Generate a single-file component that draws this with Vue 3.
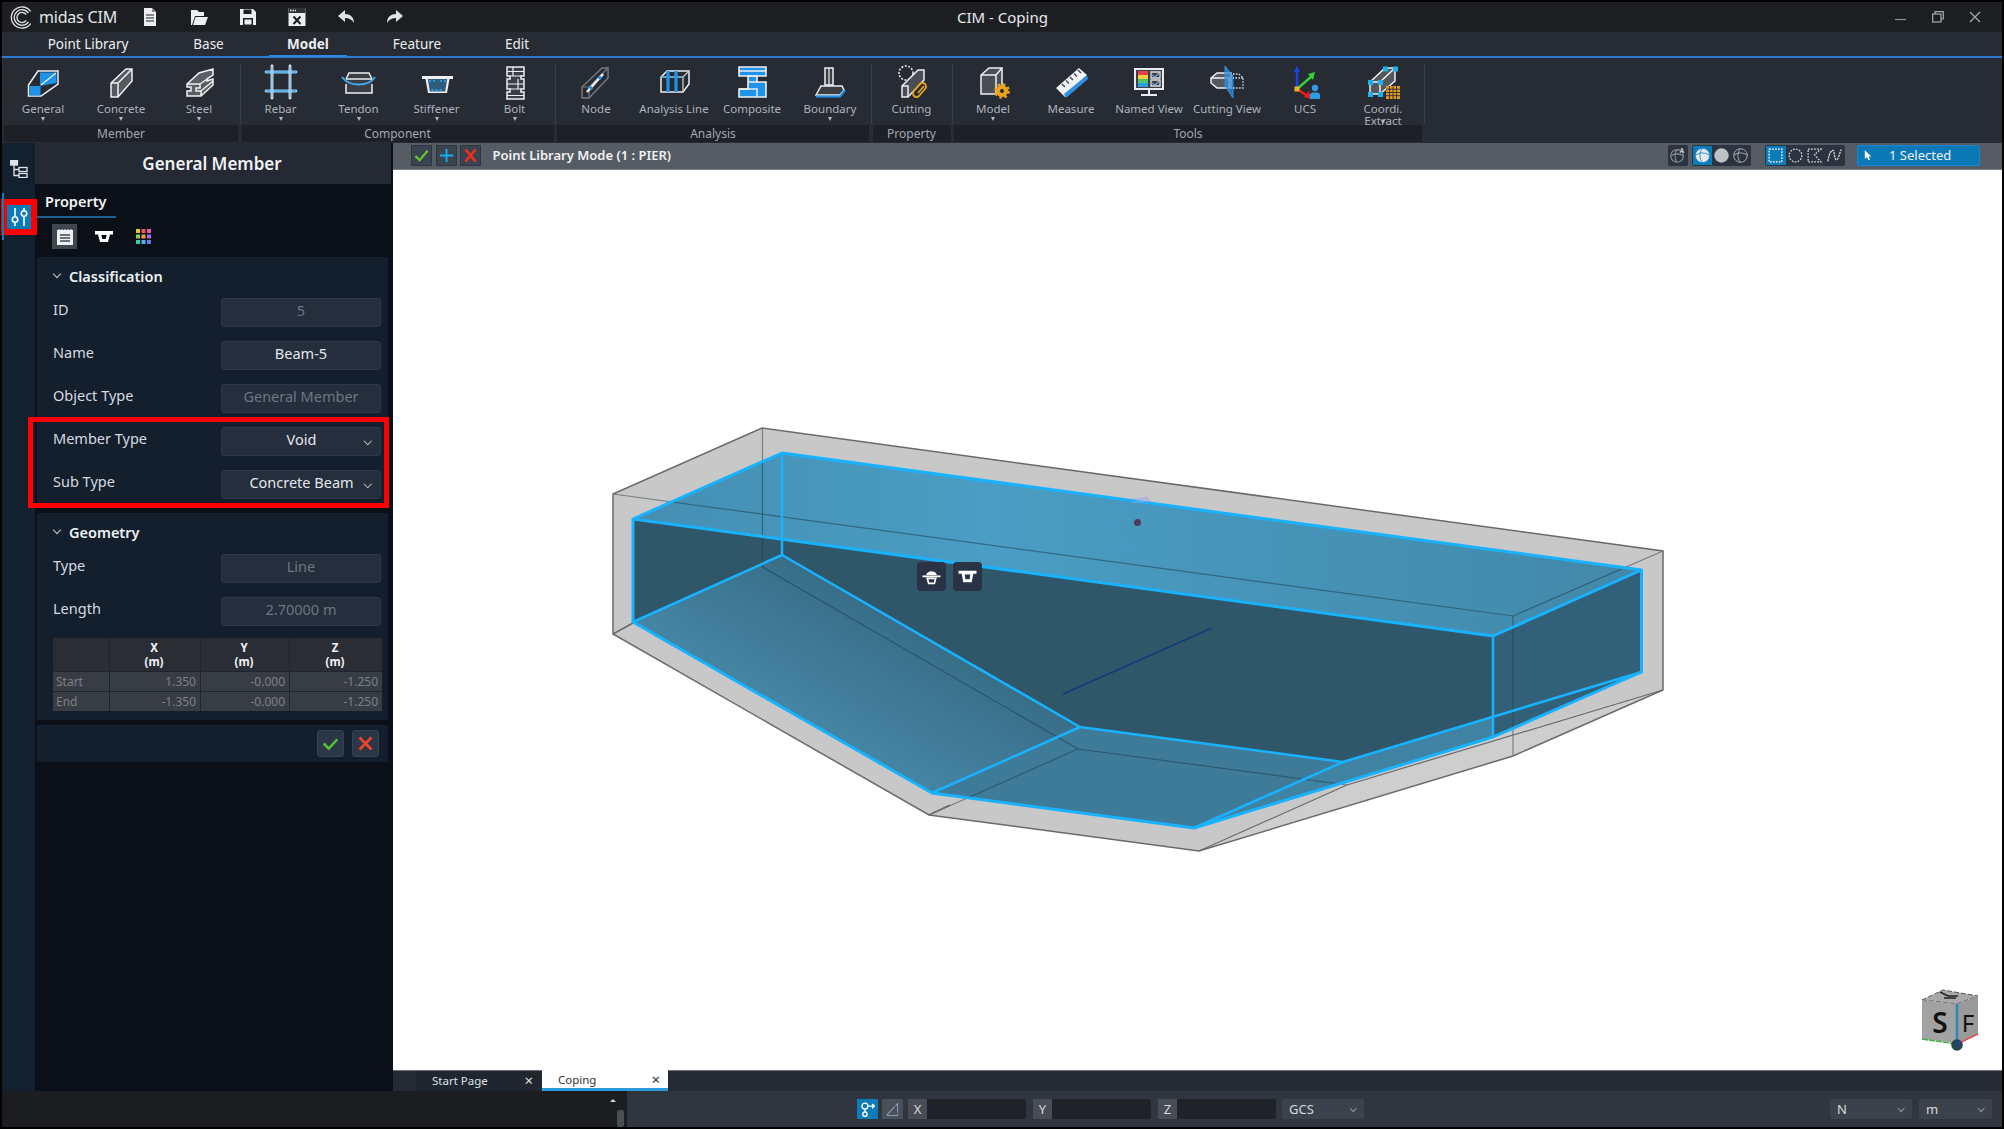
<template>
  <div class="app">
    <header class="titlebar">
      <svg class="logo" viewBox="0 0 26 26">
        <g fill="none" stroke="#dcdee2" stroke-width="1.500">
          <path d="M22.400 6.400A11.500 11.500 0 1 0 22.400 19.600" />
          <path d="M20 8.100A8.500 8.500 0 1 0 20 17.900" />
          <path d="M17.500 9.800A5.500 5.500 0 1 0 17.500 16.200" />
        </g>
      </svg>
      <span class="brand">midas CIM</span>
      <div class="quick">
        <svg v-for="q in quickIcons" :key="q.name" viewBox="0 0 20 20" v-html="q.svg"></svg>
      </div>
      <span class="doc-title">CIM - Coping</span>
      <div class="win-btns">
        <svg viewBox="0 0 12 12"><path d="M0 8.500H11" stroke="#8d9095" stroke-width="1.200" /></svg>
        <svg viewBox="0 0 12 12" fill="none" stroke="#a8abaf" stroke-width="1.200"><path d="M3 3V.7H11.300V8H9" /><rect x=".7" y="3" width="8.300" height="8" /></svg>
        <svg viewBox="0 0 12 12"><path d="M1 1L11 11M11 1L1 11" stroke="#a8abaf" stroke-width="1.200" /></svg>
      </div>
    </header>

    <nav class="menu">
      <a v-for="m in menus" :key="m.name" :class="{ on: m.name === 'Model' }" :style="{ width: m.w + 'px' }">{{ m.name }}</a>
    </nav>

    <section class="ribbon">
      <div v-for="g in groups" :key="g.name" class="group">
        <div class="tools">
          <div v-for="t in g.items" :key="t.name" class="tool">
            <svg viewBox="0 0 36 36" v-html="t.svg"></svg>
            <span class="tool-name" :class="{ two: t.two }">{{ t.name }}</span>
            <i v-if="t.drop" class="drop" :class="{ over: t.two }"></i>
          </div>
        </div>
        <div class="group-name">{{ g.name }}</div>
      </div>
    </section>

    <div class="main">
      <aside class="rail">
        <svg class="tree" viewBox="0 0 18 18" fill="none" stroke="#dfe3e8" stroke-width="1.300">
          <rect x=".5" y=".5" width="7" height="4.500" fill="#dfe3e8" />
          <path d="M4 5V15.500H9M4 9.500H9" />
          <rect x="9" y="7.500" width="8" height="4" />
          <rect x="9" y="13.500" width="8" height="4" />
        </svg>
        <div class="rail-active">
          <svg viewBox="0 0 24 24" fill="none" stroke="#fff" stroke-width="1.600">
            <path d="M8 3V11M8 18V21M17 3V5M17 12V21" />
            <circle cx="8" cy="14.500" r="2.700" />
            <circle cx="17" cy="8.500" r="2.700" />
          </svg>
        </div>
      </aside>

      <aside class="panel">
        <h2 class="panel-title">General Member</h2>
        <div class="prop-tab"><span>Property</span></div>
        <div class="prop-icons">
          <span class="prop-icon on">
            <svg viewBox="0 0 18 18"><path d="M1 2H17V17H1Z" fill="#eef0f2" /><path d="M3 1V3M6 1V3M9 1V3M12 1V3M15 1V3" stroke="#eef0f2" stroke-width="1" /><path d="M4 7H14M4 10H14M4 13H14" stroke="#3e4650" stroke-width="1.300" /></svg>
          </span>
          <span class="prop-icon">
            <svg viewBox="0 0 18 12" class="w18"><path d="M0 0H18V3.500H15L13 11H5L3 3.500H0Z" fill="#fff" /><path d="M6.300 4H11.700L10.800 8H7.200Z" fill="#0a0f18" /></svg>
          </span>
          <span class="prop-icon">
            <svg viewBox="0 0 15 15" class="w15">
              <rect v-for="c in swatches" :key="c.k" :x="c.x" :y="c.y" width="4" height="4" :fill="c.f" />
            </svg>
          </span>
        </div>

        <div class="sect">
          <div class="sect-title"><i class="chev"></i>Classification</div>
          <div class="row"><label>ID</label><div class="field off">5</div></div>
          <div class="row"><label>Name</label><div class="field">Beam-5</div></div>
          <div class="row"><label>Object Type</label><div class="field off">General Member</div></div>
          <div class="hl">
            <div class="row"><label>Member Type</label><div class="field sel">Void<i class="chev small"></i></div></div>
            <div class="row"><label>Sub Type</label><div class="field sel">Concrete Beam<i class="chev small"></i></div></div>
          </div>
        </div>

        <div class="sect second">
          <div class="sect-title"><i class="chev"></i>Geometry</div>
          <div class="row"><label>Type</label><div class="field off">Line</div></div>
          <div class="row"><label>Length</label><div class="field off">2.70000 m</div></div>
          <div class="coords">
            <div class="th"></div>
            <div class="th">X<br />(m)</div>
            <div class="th">Y<br />(m)</div>
            <div class="th">Z<br />(m)</div>
            <template v-for="r in coordRows" :key="r.name">
              <div class="td name">{{ r.name }}</div>
              <div v-for="(v, i) in r.vals" :key="i" class="td">{{ v }}</div>
            </template>
          </div>
        </div>

        <div class="sect foot">
          <button class="foot-btn"><svg viewBox="0 0 20 20"><path d="M2 10L8 16L18 5" fill="none" stroke="#52c234" stroke-width="3" /></svg></button>
          <button class="foot-btn"><svg viewBox="0 0 20 20"><path d="M3 3L17 17M17 3L3 17" fill="none" stroke="#f0442a" stroke-width="3.200" /></svg></button>
        </div>
      </aside>

      <main class="view">
        <div class="view-head">
          <button class="hbtn"><svg viewBox="0 0 16 16"><path d="M1.500 8.500L6 13L14.500 3" fill="none" stroke="#6cc52f" stroke-width="2.400" /></svg></button>
          <button class="hbtn"><svg viewBox="0 0 16 16"><path d="M8 1V15M1 8H15" stroke="#17aef0" stroke-width="2" /></svg></button>
          <button class="hbtn"><svg viewBox="0 0 16 16"><path d="M2.500 1.500L13.500 14.500M13.500 1.500L2.500 14.500" stroke="#ee2f1f" stroke-width="2.600" /></svg></button>
          <span class="mode">Point Library Mode (1 : PIER)</span>

          <div class="hgroup single">
            <svg viewBox="0 0 20 20" fill="none" stroke="#8b9096" stroke-width="1.200"><circle cx="9" cy="11" r="7" /><path d="M2 11C6 8 12 8 16 11M9 4C6 8 6 14 9 18" /><text x="12" y="7.500" font-size="7" fill="#c6c9cc" stroke="none" font-family="Noto Sans" font-weight="700">A</text></svg>
          </div>
          <div class="hgroup spheres">
            <span class="cell on"><svg viewBox="0 0 20 20" fill="#e8eaec" stroke="#1082c4" stroke-width="1"><circle cx="10" cy="10" r="8.500" /><path d="M1.500 10C6 6 14 6 18.500 10M10 1.500C6 6 6 14 10 18.500" fill="none" /></svg></span>
            <span class="cell"><svg viewBox="0 0 20 20"><circle cx="10" cy="10" r="8.500" fill="#bfc1c4" /></svg></span>
            <span class="cell"><svg viewBox="0 0 20 20" fill="none" stroke="#aeb1b5" stroke-width="1.100"><circle cx="10" cy="10" r="8" /><path d="M2 10C6 6 14 6 18 10M10 2C6 6 6 14 10 18" /></svg></span>
          </div>
          <div class="hgroup picks">
            <span class="cell on"><svg viewBox="0 0 20 20" fill="none" stroke="#fff" stroke-width="1.500" stroke-dasharray="2 1.500"><rect x="2.500" y="2.500" width="15" height="15" /></svg></span>
            <span class="cell"><svg viewBox="0 0 20 20" fill="none" stroke="#dfe1e3" stroke-width="1.500" stroke-dasharray="2 1.500"><circle cx="10" cy="10" r="7.500" /></svg></span>
            <span class="cell"><svg viewBox="0 0 20 20" fill="none" stroke="#dfe1e3" stroke-width="1.500" stroke-dasharray="2 1.500"><path d="M2.500 2.500H17.500L10 9L17.500 17.500H2.500Z" /></svg></span>
            <span class="cell"><svg viewBox="0 0 20 20" fill="none" stroke="#dfe1e3" stroke-width="1.500" stroke-dasharray="2.500 1"><path d="M2 17C4 7 6 4 8 4C10 4 10 15 12 15C15 15 16 6 18 3" /></svg></span>
          </div>
          <div class="selected">
            <svg viewBox="0 0 10 14"><path d="M1 1V12L3.800 9.500L5.500 13.500L7.500 12.500L5.800 8.800H9.200Z" fill="#fff" /></svg>
            <span>1 Selected</span>
          </div>
        </div>

        <div class="canvas">
          <svg class="scene" viewBox="393 170 1609 900">
            <defs>
              <linearGradient id="topFace" x1="0" y1="0" x2="1" y2="0">
                <stop offset="0" stop-color="#458fb3" />
                <stop offset=".35" stop-color="#4a9dc3" />
                <stop offset="1" stop-color="#4288a9" />
              </linearGradient>
              <linearGradient id="slope" gradientUnits="userSpaceOnUse" x1="860" y1="590" x2="780" y2="730">
                <stop offset="0" stop-color="#376c85" />
                <stop offset="1" stop-color="#4789a9" />
              </linearGradient>
            </defs>

            <!-- grey outer solid -->
            <polygon points="613,494 762,428 1663,551 1663,690 1513,756 1199,851 929,815 613,634" fill="#c8c8c8" />
            <polygon points="1513,732 1663,690 1513,756 1199,851 1347,785" fill="#cecece" />

            <!-- blue void -->
            <polygon points="633,519 782,453 1641.500,570 1641.500,672 1493,737 1194,828 932,793 633,622" fill="#2f5769" />
            <polygon points="633,622 782,555 1080,727 932,793" fill="url(#slope)" />
            <polygon points="932,793 1080,727 1343,762 1194,828" fill="#3e7b99" />
            <polygon points="1194,828 1343,762 1641.500,672 1493,737" fill="#3f82a2" />
            <polygon points="1493,636 1641.500,570 1641.500,672 1493,737" fill="#326078" />
            <polygon points="633,519 782,453 1641.500,570 1493,636" fill="url(#topFace)" />

            <!-- edges of the outer solid seen through the void -->
            <g fill="none" stroke="#1d3a48" stroke-opacity=".5" stroke-width="1.200">
              <path d="M613 494L1513 616L1663 551" />
              <path d="M762.500 428V567L1078 749L929 815" />
              <path d="M1078 749L1347 785" />
              <path d="M1513 616V756" />
            </g>

            <!-- outer silhouette -->
            <g fill="none" stroke="#6a6a6a" stroke-width="1.500">
              <path d="M613 494L762 428L1663 551V690L1513 756L1199 851L929 815L613 634Z" />
              <path d="M613 634L633 623M929 815L950 805" />
              <path d="M1663 690L1347 785L1199 851" stroke-width="1.200" />
            </g>

            <!-- cyan edges -->
            <g fill="none" stroke="#18b2ff" stroke-width="3" stroke-linejoin="round">
              <path d="M633 519L782 453L1641.500 570V672L1493 737L1194 828L932 793L633 622Z" />
              <path d="M633 519L1493 636L1641.500 570" />
              <path d="M782 453V555L633 622" stroke-width="2.500" />
              <path d="M782 555L1080 727L932 793" stroke-width="2.500" />
              <path d="M1080 727L1343 762L1641.500 672" stroke-width="2.500" />
              <path d="M1343 762L1194 828" stroke-width="2.500" />
              <path d="M1493 636V737" stroke-width="2.500" />
            </g>

            <path d="M1063 694L1212 628" stroke="#103d78" stroke-width="1.500" />

            <!-- pivot -->
            <g fill="none" stroke="#4a9fe6" stroke-opacity=".35" stroke-width="1">
              <path d="M1105 527L1122 519L1125 500L1147 498L1170 521L1150 536L1125 552L1120 538Z" />
              <path d="M1116 510H1158V548H1116Z" />
            </g>
            <path d="M1130 503L1147 496L1151 502Z" fill="#a9a4e8" fill-opacity=".45" />
            <circle cx="1137.500" cy="522.500" r="3.500" fill="#4a3a5c" />

            <!-- view cube -->
            <polygon points="1922,1000 1957,1004 1978,996 1943,990" fill="#a9a9a9" stroke="#555" stroke-dasharray="5 2" stroke-width="1" />
            <polygon points="1922,1000 1957,1004 1957,1043 1922,1039" fill="#a2a2a2" />
            <polygon points="1957,1004 1978,996 1978,1034 1957,1043" fill="#9a9a9a" />
            <path d="M1957 1004V1042" stroke="#2f86b8" stroke-width="2.600" />
            <path d="M1922 1039L1957 1044" stroke="#45b04a" stroke-width="1.600" stroke-dasharray="6 1" />
            <path d="M1957 1044L1978 1034" stroke="#d94f4f" stroke-width="1.600" />
            <path d="M1940 992L1948 996H1958M1944 998H1956" stroke="#222" stroke-width="1.400" fill="none" />
            <text x="1940" y="1033" class="cube-s">S</text>
            <text x="1968" y="1032" class="cube-f">F</text>
            <circle cx="1957" cy="1045" r="5.800" fill="#214a50" />
            <path d="M1957 1040A5 5 0 0 1 1962 1045H1957Z" fill="#2a3f86" />
          </svg>

          <div class="float-tools">
            <span class="float-btn"><svg viewBox="0 0 18 16"><path d="M4 6.500C5 2 13 2 14 6.500Z" fill="#fff" /><path d="M0.500 7H17.500V8.700H0.500Z" fill="#fff" /><path d="M5 9.700H13L11.700 14.500H6.300Z" fill="none" stroke="#fff" stroke-width="1.600" /></svg></span>
            <span class="float-btn"><svg viewBox="0 0 18 16"><path d="M.5 2.500H17.500V5.500H14.500L13 13.500H5L3.500 5.500H.5Z" fill="#fff" /><path d="M6.300 6H11.700L11 10.500H7Z" fill="#2a3346" /></svg></span>
          </div>
        </div>

        <div class="doc-tabs">
          <div class="doc-tab">
            <span>Start Page</span><em>×</em>
          </div>
          <div class="doc-tab on">
            <span>Coping</span><em>×</em>
          </div>
        </div>
      </main>
    </div>

    <footer class="status">
      <div class="status-left">
        <i class="up"></i>
        <i class="thumb"></i>
      </div>
      <div class="status-right">
        <span class="sbtn on"><svg viewBox="0 0 20 20" fill="none" stroke="#fff" stroke-width="1.600"><circle cx="7" cy="6" r="3.500" /><circle cx="7" cy="15.500" r="2.500" /><path d="M7 9.500V13M11 6H18M15.500 3.500L18 6L15.500 8.500" /></svg></span>
        <span class="sbtn two"><svg viewBox="0 0 20 20" fill="none" stroke="#7f9dc0" stroke-width="1.300"><path d="M3 17L16 3V17Z" stroke-dasharray="14 1.500" /></svg></span>
        <div v-for="a in axes" :key="a" class="coord"><b>{{ a }}</b><span></span></div>
        <div class="combo gcs">GCS<i></i></div>
        <div class="combo unit-n">N<i></i></div>
        <div class="combo unit-m">m<i></i></div>
      </div>
    </footer>
  </div>
</template>

<script setup>
const W = 'stroke="#eef0f2" stroke-width="1.500" fill="none"'
const BLUE = '#1f93ea'

const quickIcons = [
  { name: 'new', svg: '<path d="M4 1H12L16 5V19H4Z" fill="#eceef0"/><path d="M12 1V5H16" fill="#888"/><path d="M6 8H14M6 11H14M6 14H14" stroke="#1c1e22" stroke-width="1.200"/>' },
  { name: 'open', svg: '<path d="M2 3H8L10 5H15V9H6L3 18H2Z" fill="#eceef0"/><path d="M6.500 10H19L16 18H4Z" fill="#eceef0"/>' },
  { name: 'save', svg: '<path d="M2 2H15L18 5V18H2Z" fill="#eceef0"/><rect x="5.500" y="2.500" width="8" height="4.500" fill="#1c1e22"/><rect x="5" y="11" width="10" height="7" fill="#1c1e22"/><rect x="6.500" y="12.500" width="7" height="5" fill="#eceef0"/>' },
  { name: 'close', svg: '<rect x="1.500" y="1" width="17" height="18" fill="#eceef0"/><rect x="1.500" y="1" width="17" height="5" fill="#30333a"/><path d="M3 3.500H9" stroke="#eceef0" stroke-width="1.400" stroke-dasharray="1.500 1"/><path d="M6.500 9.500L13.500 17M13.500 9.500L6.500 17" stroke="#1c1e22" stroke-width="2"/>' },
  { name: 'undo', svg: '<path d="M9 3L2 9L9 15V11C13 11 16 12.500 18 16C18 10 14 7 9 7Z" fill="#e0e2e5"/>' },
  { name: 'redo', svg: '<path d="M11 3L18 9L11 15V11C7 11 4 12.500 2 16C2 10 6 7 11 7Z" fill="#e0e2e5"/>' }
]

const menus = [
  { name: 'Point Library', w: 120 },
  { name: 'Base', w: 121 },
  { name: 'Model', w: 78 },
  { name: 'Feature', w: 140 },
  { name: 'Edit', w: 60 }
]

const icon = {
  general: `<path d="M3.500 21L13 7H33V20L16 32H3.500Z" ${W}/><path d="M15 8.500H31.500V19L18 21.500H15Z" fill="${BLUE}"/><path d="M16 21L31 9" stroke="#eef0f2" stroke-width="1.200"/><rect x="4.500" y="22" width="11" height="9.500" fill="${BLUE}"/>`,
  concrete: `<path d="M8 19L23 5H29V17L15 33H8Z" fill="#55585d"/><path d="M8 19L23 5H29V17L15 33H8ZM8 19H15V33M15 19L29 5" ${W}/>`,
  steel: `<path d="M6 20L18 8L32 5V11L27 15L32 15V21L20 32H6V27L11 23L6 24Z" fill="#5b5e63"/><path d="M6 20L18 9L32 5V11L26 15V17L32 15V21L20 32H6V27H10V23H6ZM6 20H19M19 20V24H15V27H20V32M19 20L32 11M20 27L32 17" ${W}/>`,
  rebar: `<path d="M3 8H33M3 27H33" stroke="#8fd0f7" stroke-width="2.800" stroke-linecap="round"/><path d="M3 8H33M3 27H33" stroke="#2a93e3" stroke-width="1"/><path d="M9 2V34M27 2V34" stroke="#eef0f2" stroke-width="2.800" stroke-linecap="round"/><path d="M9 2V34M27 2V34" stroke="#2a93e3" stroke-width=".9"/>`,
  tendon: `<path d="M5 15L8 9H28L31 15V29H5Z" fill="#3a3d42"/><path d="M5 15L8 9H28L31 15M5 20V29H31V20" ${W} stroke-width="1.800"/><path d="M1 13C8 23 28 23 34 13" stroke="#41a9ee" stroke-width="2" fill="none"/><path d="M5 15H31" stroke="#eef0f2" stroke-width="1.500"/>`,
  stiffener: `<path d="M3 12H34V15H30.500L28 29H9L6.500 15H3Z" fill="#eef0f2"/><path d="M8.800 15H28.200L26.200 27.500H10.800Z" fill="#2f5d7f"/><path d="M11 16V18M15 16V18M22 16V18M26 16V18M12.500 26H24.500" stroke="#41a9ee" stroke-width="1.400" stroke-dasharray="2 2"/>`,
  bolt: `<path d="M10 3H27V12H24V15H27V25H24V28H27V35H10V28H13V25H10V15H13V12H10Z" fill="#3b3e43" stroke="#eef0f2" stroke-width="1.500"/><path d="M10 7.500H27M10 20H27M10 31.500H27M13 12H24M13 25H24M16 3V12M21 15V25" stroke="#eef0f2" stroke-width="1.200"/>`,
  node: `<path d="M4 23L24 4H30V14L11 34H4Z" fill="none" stroke="#74787f" stroke-width="1.500"/><path d="M4 23H11V34M11 23L30 4" stroke="#74787f" stroke-width="1.200" fill="none"/><path d="M9 28L25 10" stroke="#eef0f2" stroke-width="2.600"/><path d="M12 25L14 23M21 15L23 12.500" stroke="${BLUE}" stroke-width="3.400"/>`,
  analysis: `<path d="M5 13L11 7H33V20L27 28H5Z" ${W} stroke="#c9ccd0"/><path d="M5 13H27V28M27 13L33 7" stroke="#c9ccd0" stroke-width="1.300" fill="none"/><path d="M12 7V28M20 7V28" stroke="${BLUE}" stroke-width="3.200"/><path d="M5 13H27" stroke="${BLUE}" stroke-width="1" opacity=".7"/>`,
  composite: `<path d="M5 3H32V12H23V18H32V33H5V25H14V12H5Z" fill="${BLUE}" stroke="#eef0f2" stroke-width="1.600"/><path d="M5 7H32M14 18H23M5 25H23V33" stroke="#eef0f2" stroke-width="1.400" fill="none"/><path d="M14 12H23" stroke="#eef0f2" stroke-width="1.800"/>`,
  boundary: `<path d="M13 4H21V21H13Z" fill="#3a3d42" stroke="#eef0f2" stroke-width="1.500"/><path d="M17 4V21" stroke="#eef0f2" stroke-width="1.200"/><path d="M4 31L9 22H30L32 26L28 31Z" fill="#3a3d42" stroke="#eef0f2" stroke-width="1.500"/><path d="M4 32.500H28L33 26" stroke="${BLUE}" stroke-width="2.200" fill="none"/>`,
  cutting: `<circle cx="12" cy="9" r="7" fill="none" stroke="#eef0f2" stroke-width="1.500" stroke-dasharray="2 1.500"/><path d="M8 33V22L24 6H30V16L14 33Z" fill="#4a4d52" stroke="#eef0f2" stroke-width="1.500"/><path d="M8 22H14V33" ${W}/><path d="M20 27L26 20A3.500 3.500 0 0 1 31 25L25 32A3.500 3.500 0 0 1 20 27M24 29L30 22" fill="none" stroke="#e8a21d" stroke-width="1.800"/>`,
  model: `<path d="M6 30V11L14 4H27V22L21 30Z" fill="#4a4d52" stroke="#eef0f2" stroke-width="1.500"/><path d="M6 11H21V30M21 11L27 4" ${W}/><circle cx="27" cy="27" r="6" fill="#eda21b"/><circle cx="27" cy="27" r="6.500" fill="none" stroke="#eda21b" stroke-width="2.600" stroke-dasharray="2.500 2.600"/><circle cx="27" cy="27" r="2" fill="#262b34"/>`,
  measure: `<path d="M3 24L26 4L34 11L12 33Z" fill="#f2f3f5"/><path d="M11 30L34 11L35 15L13 34Z" fill="#2f8fe0"/><path d="M9 20L12 23M13 16.500L16 19.500M17 13L20 16M21 9.500L24 12.500M25 6L28 9" stroke="#4a4d52" stroke-width="1.500"/>`,
  named: `<rect x="3" y="4" width="30" height="22" fill="#e8eaec"/><rect x="5" y="6" width="26" height="18" fill="#3b3e43"/><rect x="7" y="7" width="10" height="16" fill="#e84545"/><rect x="7" y="11" width="10" height="4" fill="#f1d13a"/><rect x="7" y="15" width="10" height="4" fill="#4fc26a"/><rect x="7" y="19" width="10" height="4" fill="#2f9be6"/><path d="M20 8H29V14H20ZM20 16H29V22H20Z" fill="none" stroke="#dfe1e4" stroke-width="1.300"/><path d="M21 11L24 13L28 9M21 19L24 21L28 17" stroke="#6faede" stroke-width="1.200" fill="none"/><path d="M17 26H19V30H17ZM10 30H26V32H10Z" fill="#e8eaec"/>`,
  cview: `<path d="M2 14L8 9H22V24H8L2 19Z" fill="#55585d" stroke="#eef0f2" stroke-width="1.500"/><path d="M2 14H20V24" ${W}/><path d="M16 2L24 12V34L16 22Z" fill="#2f8fe0" fill-opacity=".75" stroke="#2f8fe0"/><path d="M24 10H30L34 14V24H24M34 14H24" stroke="#dfe1e4" stroke-width="1.300" stroke-dasharray="1.500 1.500" fill="none"/>`,
  ucs: `<path d="M10 25V6" stroke="#1545e6" stroke-width="2.400"/><path d="M10 2L7 8H13Z" fill="#1545e6"/><path d="M10 25L25 12" stroke="#32d337" stroke-width="2.400"/><path d="M28 8L21 10L26 16Z" fill="#32d337"/><path d="M10 25L22 33" stroke="#ee1c1c" stroke-width="2.400"/><path d="M24 35L17 33L22 27Z" fill="#ee1c1c"/><rect x="7.500" y="22.500" width="5" height="5" fill="#f0b429"/><circle cx="28" cy="24" r="3.200" fill="#2f9be6"/><path d="M23 35V31C23 29 25 28.500 28 28.500C31 28.500 33 29 33 31V35Z" fill="#2f9be6"/>`,
  coordi: `<path d="M5 30V18L20 4H30V17L15 30Z" fill="#55585d" stroke="#eef0f2" stroke-width="1.500"/><path d="M5 18H15V30M15 18L30 4" ${W}/><path d="M3 16H8V21H3ZM13 16H18V21H13ZM18 2.500H23V7.500H18ZM28 2.500H33V7.500H28ZM3 28H8V33H3ZM13 28H18V33H13Z" fill="#19b4ea"/><rect x="21" y="22" width="14" height="13" fill="#e69a1a"/><path d="M24.500 22V35M28 22V35M31.500 22V35M21 25.200H35M21 28.500H35M21 31.700H35" stroke="#2a2d33" stroke-width=".9"/>`
}

const groups = [
  { name: 'Member', items: [
    { name: 'General', svg: icon.general, drop: true },
    { name: 'Concrete', svg: icon.concrete, drop: true },
    { name: 'Steel', svg: icon.steel, drop: true }
  ] },
  { name: 'Component', items: [
    { name: 'Rebar', svg: icon.rebar, drop: true },
    { name: 'Tendon', svg: icon.tendon, drop: true },
    { name: 'Stiffener', svg: icon.stiffener, drop: true },
    { name: 'Bolt', svg: icon.bolt, drop: true }
  ] },
  { name: 'Analysis', items: [
    { name: 'Node', svg: icon.node },
    { name: 'Analysis Line', svg: icon.analysis },
    { name: 'Composite', svg: icon.composite },
    { name: 'Boundary', svg: icon.boundary, drop: true }
  ] },
  { name: 'Property', items: [
    { name: 'Cutting', svg: icon.cutting }
  ] },
  { name: 'Tools', items: [
    { name: 'Model', svg: icon.model, drop: true },
    { name: 'Measure', svg: icon.measure },
    { name: 'Named View', svg: icon.named },
    { name: 'Cutting View', svg: icon.cview },
    { name: 'UCS', svg: icon.ucs },
    { name: 'Coordi. Extract', svg: icon.coordi, drop: true, two: true }
  ] }
]

const palette = ['#e8c33a', '#ef5a5a', '#ee5ab0', '#8fd14f', '#f0a13a', '#a56be8', '#3ec9a7', '#4ab6ee', '#6a7be8']
const swatches = palette.map((f, i) => ({ k: i, f, x: (i % 3) * 5.5, y: Math.floor(i / 3) * 5.5 }))

const coordRows = [
  { name: 'Start', vals: ['1.350', '-0.000', '-1.250'] },
  { name: 'End', vals: ['-1.350', '-0.000', '-1.250'] }
]

const axes = ['X', 'Y', 'Z']
</script>

<style scoped>
.app {
  width: 2004px;
  height: 1129px;
  box-sizing: border-box;
  padding: 2px;
  background: #000;
  display: flex;
  flex-direction: column;
  font-family: "Noto Sans", "Liberation Sans", sans-serif;
  color: #e6e8eb;
  overflow: hidden;
}

.titlebar {
  height: 30px;
  flex: none;
  background: #1c1e22;
  display: flex;
  align-items: center;
  position: relative;
}
.logo { width: 24px; height: 25px; margin-left: 8px; flex: none; }
.brand { margin-left: 5px; font-size: 16px; color: #e4e6e9; letter-spacing: -0.2px; width: 91px; white-space: nowrap; }
.quick { display: flex; margin-left: 10px; gap: 29px; }
.quick svg { width: 20px; height: 20px; }
.doc-title {
  position: absolute;
  left: 955px;
  top: 5px;
  font-size: 15px;
  color: #e8eaec;
}
.win-btns { margin-left: auto; margin-right: 21px; display: flex; gap: 25px; }
.win-btns svg { width: 12px; height: 12px; }

.menu {
  height: 24px;
  flex: none;
  background: #262b34;
  display: flex;
  padding-left: 26px;
}
.menu a {
  font-size: 13.500px;
  line-height: 24px;
  text-align: center;
  color: #eceef0;
  flex: none;
  position: relative;
}
.menu a.on { font-weight: 700; }
.menu a.on::after {
  content: "";
  position: absolute;
  left: 0;
  right: 0;
  bottom: -1px;
  height: 2px;
  background: #2f86dc;
}

.ribbon {
  height: 87px;
  flex: none;
  box-sizing: border-box;
  border-top: 2px solid #2d7bd0;
  background: #262b34;
  display: flex;
  gap: 3.500px;
  padding: 0 0 1px 2px;
}
.group { display: flex; flex-direction: column; position: relative; }
.group::after {
  content: "";
  position: absolute;
  right: -2.500px;
  top: 6px;
  height: 60px;
  width: 1px;
  background: #3a3f48;
}
.tools { display: flex; height: 67px; padding-top: 6px; box-sizing: border-box; }
.tool {
  width: 78px;
  display: flex;
  flex-direction: column;
  align-items: center;
  position: relative;
}
.tool svg { width: 36px; height: 36px; flex: none; }
.tool-name {
  font-size: 11.500px;
  line-height: 18px;
  height: 17px;
  color: #aeb3ba;
  white-space: nowrap;
}
.tool-name.two {
  white-space: normal;
  width: 50px;
  height: auto;
  text-align: center;
  line-height: 11.500px;
  margin-top: 3px;
}
.drop {
  width: 0;
  height: 0;
  border-left: 2.500px solid transparent;
  border-right: 2.500px solid transparent;
  border-top: 4px solid #b5b9bf;
  margin-top: 0;
}
.drop.over { margin-top: -6px; }
.group-name {
  height: 17px;
  line-height: 17px;
  font-size: 12px;
  text-align: center;
  color: #a2a7ad;
  background: #1d2026;
}

.main { flex: 1; min-height: 0; display: flex; background: #101722; }

.rail {
  width: 33px;
  flex: none;
  background: #13202f;
  position: relative;
  z-index: 2;
  padding-top: 17px;
  box-sizing: border-box;
}
.tree { display: block; width: 18px; height: 18px; margin-left: 8px; }
.rail-active {
  margin: 27px 0 0 5px;
  width: 24px;
  height: 24px;
  background: #0c7cb8;
  outline: 6.500px solid #f00;
  display: flex;
}
.rail-active svg { width: 24px; height: 24px; }
.rail::before {
  content: "";
  position: absolute;
  left: 0;
  top: 50px;
  width: 2px;
  height: 47px;
  background: #0c7cb8;
}

.panel {
  width: 358px;
  flex: none;
  background: #0a0f18;
  box-sizing: border-box;
  padding-right: 2px;
}
.panel-title {
  margin: 0;
  height: 41px;
  line-height: 41px;
  background: #242933;
  font-size: 17px;
  font-weight: 600;
  text-align: center;
  color: #f0f2f4;
  padding-right: 2px;
}
.prop-tab { height: 34px; padding-left: 2px; }
.prop-tab span {
  display: block;
  width: 79px;
  height: 34px;
  box-sizing: border-box;
  padding-left: 8px;
  line-height: 35px;
  font-size: 14.500px;
  font-weight: 600;
  color: #f2f3f5;
  border-bottom: 2px solid #1d5f8f;
}
.prop-icons { display: flex; height: 39px; padding: 6px 0 0 17px; box-sizing: border-box; }
.prop-icon { width: 25px; height: 25px; display: flex; align-items: center; justify-content: center; margin-right: 14.500px; }
.prop-icon.on { background: #3e4650; }
.prop-icon svg { width: 18px; height: 18px; }
.prop-icon svg.w18 { width: 18px; height: 12px; }
.prop-icon svg.w15 { width: 15px; height: 15px; }

.sect {
  margin: 0 3px 0 2px;
  padding: 9px 7px 9px 16px;
  background: #141f2e;
  height: 250px;
  box-sizing: border-box;
}
.sect.second { margin-top: 6px; height: 207px; }
.sect-title {
  height: 22px;
  line-height: 20px;
  font-size: 14.500px;
  font-weight: 600;
  color: #eef0f2;
  margin-bottom: 10px;
  position: relative;
  padding-left: 16px;
}
.chev {
  position: absolute;
  left: 1px;
  top: 5px;
  width: 5px;
  height: 5px;
  border-right: 1.300px solid #c9ccd0;
  border-bottom: 1.300px solid #c9ccd0;
  transform: rotate(45deg);
}
.row {
  display: flex;
  justify-content: space-between;
  height: 29px;
  margin-bottom: 14px;
}
.row label {
  font-size: 14.500px;
  line-height: 22px;
  color: #d5dae0;
}
.field {
  width: 160px;
  height: 29px;
  box-sizing: border-box;
  border: 1px solid #2d3747;
  border-radius: 3px;
  background: #242e3d;
  font-size: 14.500px;
  line-height: 23px;
  text-align: center;
  color: #e4e7ea;
  position: relative;
}
.field.off { color: #6c7683; }
.field.sel { padding-left: 1px; white-space: nowrap; }
.chev.small { left: auto; right: 10px; top: 10px; width: 4.500px; height: 4.500px; }
.hl { position: relative; z-index: 3; }
.hl .row:last-child { margin-bottom: 0; }
.hl::after {
  content: "";
  position: absolute;
  left: -25px;
  right: -8px;
  top: -10px;
  bottom: -9px;
  border: 5px solid #f00;
  pointer-events: none;
}

.coords {
  margin-top: -2px;
  display: grid;
  grid-template-columns: 56px 90px 88px 92px;
  grid-template-rows: 33px 19px 19px;
  gap: 1px;
  background: #1d2530;
  width: 329px;
}
.th {
  background: #2a2d34;
  font-size: 11.500px;
  font-weight: 700;
  line-height: 14px;
  text-align: center;
  padding-top: 3px;
  padding-right: 2px;
  color: #f2f3f5;
}
.td {
  background: #383c43;
  font-size: 12px;
  line-height: 19px;
  text-align: right;
  padding-right: 4px;
  color: #7c8087;
}
.td.name { text-align: left; padding-left: 3px; padding-right: 0; }

.sect.foot {
  margin-top: 5px;
  height: 37px;
  padding: 5px 9px 0 0;
  display: flex;
  justify-content: flex-end;
  gap: 8px;
}
.foot-btn {
  width: 27px;
  height: 27px;
  padding: 4px;
  background: #2b3646;
  border: 1px solid #36414f;
  border-radius: 3px;
  box-sizing: border-box;
}
.foot-btn svg { display: block; width: 100%; height: 100%; }

.view { flex: 1; min-width: 0; display: flex; flex-direction: column; background: #fff; }
.view-head {
  height: 27px;
  flex: none;
  background: #565c63;
  display: flex;
  align-items: center;
  padding: 0 22px 2px 18px;
  box-sizing: border-box;
  border-bottom: 1px solid #7a7f85;
}
.hbtn {
  width: 21px;
  height: 21px;
  margin-right: 3.500px;
  padding: 2px;
  background: #3a4350;
  border: 1px solid #2f3642;
  box-sizing: border-box;
}
.hbtn svg { display: block; width: 100%; height: 100%; }
.mode { margin-left: 8px; font-size: 13px; font-weight: 600; color: #f2f3f5; }
.hgroup {
  display: flex;
  align-items: center;
  height: 21px;
  background: #2b3340;
  border-radius: 2px;
  box-sizing: border-box;
  padding: 0 1px;
}
.hgroup.single { margin-left: auto; width: 20px; padding: 0 1px; margin-right: 4px; }
.hgroup.single svg { width: 18px; height: 18px; }
.hgroup.spheres { width: 59px; margin-right: 14px; }
.hgroup.picks { width: 80px; margin-right: 12px; }
.cell { flex: 1; height: 19px; display: flex; align-items: center; justify-content: center; }
.cell.on { background: #0c7cb8; }
.cell svg { width: 17px; height: 17px; }
.selected {
  width: 123px;
  height: 21px;
  box-sizing: border-box;
  background: #0a79b6;
  border: 1px solid #1a86d8;
  border-radius: 2px;
  display: flex;
  align-items: center;
  padding-left: 6px;
  font-size: 13px;
  color: #f0f3f5;
}
.selected svg { width: 8px; height: 12px; }
.selected span { margin-left: 17px; }

.canvas { flex: 1; min-height: 0; position: relative; }
.scene { display: block; width: 1609px; height: 900px; }
.cube-s { font: 600 28px "Noto Sans", sans-serif; fill: #111; text-anchor: middle; }
.cube-f { font: 400 24px "Noto Sans", sans-serif; fill: #111; text-anchor: middle; }
.float-tools { position: absolute; left: 524px; top: 392px; display: flex; gap: 7px; }
.float-btn {
  width: 29px;
  height: 29px;
  background: #2a3346;
  border-radius: 4px;
  display: flex;
  align-items: center;
  justify-content: center;
}
.float-btn svg { width: 19px; height: 17px; }

.doc-tabs {
  height: 21px;
  flex: none;
  background: #262b33;
  border-top: 1px solid #6e7278;
  box-sizing: border-box;
  display: flex;
  padding-left: 23px;
  font-size: 11.500px;
}
.doc-tab {
  width: 125px;
  display: flex;
  align-items: center;
  padding: 0 8px 2px 16px;
  box-sizing: border-box;
  background: #20262f;
  color: #dfe2e6;
  margin-right: 1px;
  height: 20px;
}
.doc-tab em { margin-left: auto; font-style: normal; font-size: 15px; line-height: 1; }
.doc-tab.on {
  width: 126px;
  background: #fff;
  color: #333;
  border-bottom: 3px solid #2b9bdc;
  margin-top: -1px;
  height: 21px;
  padding-top: 1px;
  padding-bottom: 0;
}

.status { height: 36px; flex: none; display: flex; }
.status-left { width: 625px; background: #1b1d21; position: relative; }
.up {
  position: absolute;
  left: 608px;
  top: 8px;
  border-left: 3px solid transparent;
  border-right: 3px solid transparent;
  border-bottom: 3px solid #d0d2d5;
}
.thumb {
  position: absolute;
  left: 615px;
  top: 19px;
  width: 7px;
  height: 17px;
  border-radius: 2px;
  background: #4a4d52;
}
.status-right {
  flex: 1;
  background: #30363f;
  display: flex;
  align-items: flex-start;
  padding: 8px 10px 0 230px;
  box-sizing: border-box;
}
.sbtn {
  width: 21px;
  height: 20px;
  flex: none;
  display: flex;
  align-items: center;
  justify-content: center;
  background: #4a5058;
  margin-right: 4px;
}
.sbtn.on { background: #0c7cb8; }
.sbtn.two { margin-right: 5px; }
.sbtn svg { width: 17px; height: 17px; }
.coord {
  width: 118px;
  height: 20px;
  flex: none;
  display: flex;
  margin-right: 7px;
  background: #1f2328;
  border-radius: 2px;
}
.coord b {
  width: 19px;
  background: #484d55;
  font-size: 13px;
  font-weight: 400;
  line-height: 20px;
  text-align: center;
  color: #d8dade;
}
.combo {
  height: 20px;
  flex: none;
  background: #3c424b;
  border-radius: 2px;
  font-size: 13px;
  line-height: 20px;
  color: #d8dade;
  padding-left: 7px;
  box-sizing: border-box;
  position: relative;
}
.combo i {
  position: absolute;
  right: 9px;
  top: 7px;
  width: 3.500px;
  height: 3.500px;
  border-right: 1px solid #9a9ea4;
  border-bottom: 1px solid #9a9ea4;
  transform: rotate(45deg);
}
.gcs { width: 82px; margin-left: -1px; }
.unit-n { width: 82px; margin-left: auto; margin-right: 7px; }
.unit-m { width: 73px; }
</style>
